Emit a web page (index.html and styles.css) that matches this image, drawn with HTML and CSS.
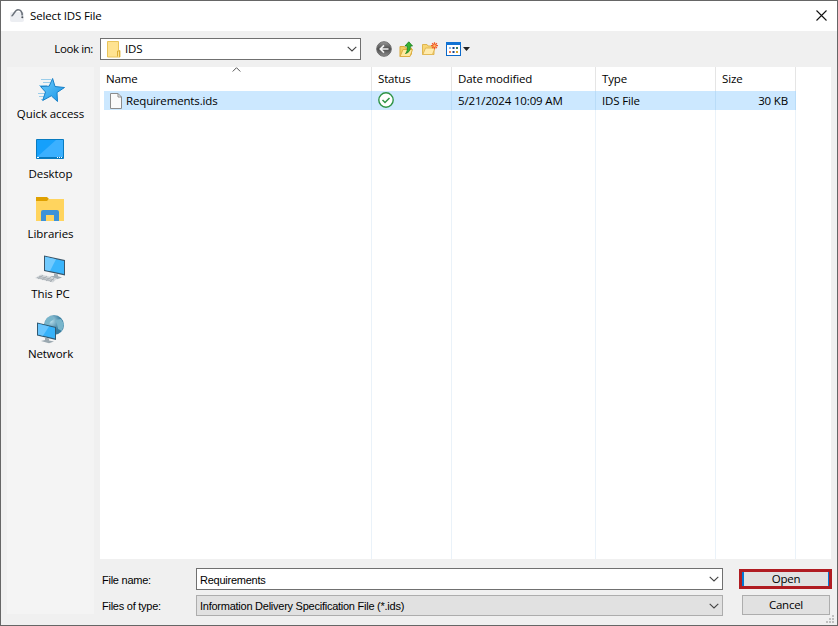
FILE: index.html
```html
<!DOCTYPE html>
<html lang="en">
<head>
    <meta charset="UTF-8">
    <meta name="viewport" content="width=device-width, initial-scale=1.0">
    <title>Select IDS File</title>
    <link rel="stylesheet" href="styles.css">
</head>
<body>
    <div class="dialog">
        <!-- Title bar -->
        <header class="titlebar">
            <svg class="app-icon" width="14" height="14" viewBox="0 0 14 14">
                <rect x="0" y="4" width="14" height="10" rx="2" fill="#eceef2"/>
                <path d="M1.500 8C4 7.500 4.500 1.800 8 1.800C11 1.800 12.200 4 12.200 7.500" fill="none" stroke="#6b727b" stroke-width="1.600"/>
                <circle cx="12.300" cy="9.200" r="1" fill="#4a5058"/>
            </svg>
            <h1>Select IDS File</h1>
            <svg class="close" width="11" height="11" viewBox="0 0 11 11"><path d="M.5.5l10 10M10.500.5l-10 10" stroke="#111" stroke-width="1.100"/></svg>
        </header>

        <!-- Folder selector and tools -->
        <div class="lookbar">
            <label class="look-label">Look in:</label>
            <div class="combo look-combo">
                <svg width="14" height="17" viewBox="0 0 14 17">
                    <path d="M.5.5h11v9h1.500v6.500H.5z" fill="#ffe391" stroke="#e9c45a"/>
                    <path d="M10.500 15.500v-5.500h2v6" fill="#ffe391" stroke="#dcae36"/>
                </svg>
                <span class="combo-text">IDS</span>
                <svg class="chevron" width="10" height="6" viewBox="0 0 10 6"><path d="M.7.8L5 5L9.300.8"/></svg>
            </div>
            <div class="tools">
                <svg width="16" height="16" viewBox="0 0 16 16">
                    <defs><linearGradient id="back" x2="0" y2="1"><stop stop-color="#9a9a9a"/><stop offset=".5" stop-color="#4c4c4c"/><stop offset="1" stop-color="#8f8f8f"/></linearGradient></defs>
                    <circle cx="8" cy="8" r="7.300" fill="url(#back)" stroke="#6d6d6d"/>
                    <path d="M12.500 8H4.500M8 4.300L4.300 8L8 11.700" fill="none" stroke="#f2f2f2" stroke-width="1.700"/>
                </svg>
                <svg width="15" height="17" viewBox="0 0 15 17">
                    <path d="M1 5.500h4.500l1 1.500h6V13L10 15.500H1z" fill="#f2cd62" stroke="#d9a93b"/>
                    <path d="M4 8.500h9.500L11 15.500H1z" fill="#ffe99f" stroke="#dcae43"/>
                    <path d="M6.500 12.500C8.500 11 8.500 8 8.200 5H6L9.800.8L13.500 5H11.300C11.500 8.500 10.500 11.500 6.500 12.500z" fill="#35b531" stroke="#187b20" stroke-width=".8"/>
                </svg>
                <svg width="16" height="14" viewBox="0 0 16 14">
                    <path d="M.5 2.500h4.500l1 1.500h6V12.500H.5z" fill="#f7d675" stroke="#dfb54f"/>
                    <path d="M3.500 6h9.500L10.500 12.500H.8z" fill="#ffebad" stroke="#e2b957"/>
                    <path d="M12.500 .2v7M9 3.700h7M10.100 1.300l4.800 4.800M14.900 1.300L10.100 6.100" stroke="#f05a28" stroke-width="1.300"/>
                    <circle cx="12.500" cy="3.700" r="1.200" fill="#ffc06b"/>
                </svg>
                <svg width="24" height="14" viewBox="0 0 24 14">
                    <rect x=".5" y=".5" width="14" height="13" fill="#fff" stroke="#0a68c9"/>
                    <path d="M0 0h15v3H0z" fill="#1173d4"/>
                    <path d="M3 5h2v2H3z" fill="#8dbbe8"/>
                    <path d="M6.500 5h2v2h-2zM6.500 9h2v2h-2z" fill="#17478f"/>
                    <path d="M10 5h2v2h-2z" fill="#3b7c5b"/>
                    <path d="M3 9h2v2H3z" fill="#ef7d53"/>
                    <path d="M10 9h2v2h-2z" fill="#d6a72d"/>
                    <path d="M17 5h7l-3.500 4z" fill="#222"/>
                </svg>
            </div>
        </div>

        <div class="content">
            <!-- Places -->
            <nav class="places">
                <a class="place">
                    <svg width="32" height="32" viewBox="0 0 32 32">
                        <defs><linearGradient id="star" x2="1" y2="1"><stop stop-color="#70ccfa"/><stop offset="1" stop-color="#1594e8"/></linearGradient></defs>
                        <path d="M7 5.500h10M9 8.500h7M5 11.500h8M4 19.500h7M5 22.500h6M7 25.500h3" stroke="#9bcdea"/>
                        <path d="M18.600 4.500L21 12.500L30.500 13.500L23 18.500L23.500 27.500L17.300 21.800L8.700 26.500L11.500 18L6.500 12.500L15.200 12.200z" fill="url(#star)" stroke="#1680c8"/>
                    </svg>
                    <span>Quick access</span>
                </a>
                <a class="place">
                    <svg width="32" height="32" viewBox="0 0 32 32">
                        <path d="M2.500 5.500h27v19h-27z" fill="#15a0fb" stroke="#087bc0"/>
                        <path d="M3 23L22 6h7v17z" fill="#3bb0ff"/>
                        <path d="M3 23.500h26" stroke="#0877bc"/>
                        <path d="M3 23.500h2M23 23.500h1M25 23.500h1M27 23.500h1" stroke="#fff"/>
                    </svg>
                    <span>Desktop</span>
                </a>
                <a class="place">
                    <svg width="32" height="32" viewBox="0 0 32 32">
                        <path d="M2 3h11l2 2-2 3H2z" fill="#dfa000"/>
                        <path d="M2 7h11l2-2h15v22H2z" fill="#ffd45e"/>
                        <path d="M7 27V18q0-2 2-2h14q2 0 2 2v9h-5v-6h-8v6z" fill="#3c92d7"/>
                    </svg>
                    <span>Libraries</span>
                </a>
                <a class="place">
                    <svg width="32" height="32" viewBox="0 0 32 32">
                        <path d="M10 1.500L31 6V21.500L10 17z" fill="#3a566a"/>
                        <path d="M11 2.800L30 7V20L11 16z" fill="#3ab5fc"/>
                        <path d="M11 2.800L22 5.200L16 17L11 16z" fill="#71cafe"/>
                        <path d="M20 19.500l4 1v3l-4-1zM16 22.500l6-1 6 2-5 1.800z" fill="#a1adb5"/>
                        <path d="M7 20.500l16 4-4 4L1 24z" fill="#d3d7da"/>
                        <path d="M5 22.300l15 3.700M3 23.500l15 3.700M9 21l-5 4M13 22l-5 4M17 23l-5 4M20 24l-4 4" stroke="#969ea5" stroke-width=".6"/>
                    </svg>
                    <span>This PC</span>
                </a>
                <a class="place">
                    <svg width="32" height="32" viewBox="0 0 32 32">
                        <defs><radialGradient id="globe" cx=".35" cy=".3"><stop stop-color="#b8dfec"/><stop offset="1" stop-color="#377c9f"/></radialGradient></defs>
                        <circle cx="20" cy="11" r="10" fill="url(#globe)"/>
                        <path d="M13 4l5-2 2 3-4 3-2 5-4-2zM21 6l6-1 3 5-2 7-4-2-1-5z" fill="#78b5cb"/>
                        <path d="M3 8.500L22 13V26L3 21.500z" fill="#315971"/>
                        <path d="M4 9.800L21 13.800V24.500L4 20.500z" fill="#36b2fa"/>
                        <path d="M4 9.800L15 12.400L9 21.700L4 20.500z" fill="#69c5fd"/>
                        <path d="M11 23.500l4 1v2l5 1-5 1.800-8-2.300 4-1z" fill="#9ba8b0"/>
                    </svg>
                    <span>Network</span>
                </a>
            </nav>

            <!-- File list -->
            <main class="files">
                <div class="file-row file-head">
                    <span>Name</span>
                    <span>Status</span>
                    <span>Date modified</span>
                    <span>Type</span>
                    <span>Size</span>
                    <svg class="sort" width="9" height="5" viewBox="0 0 9 5"><path d="M.7 4.500L4.500.7L8.300 4.500" fill="none" stroke="#555"/></svg>
                </div>
                <div class="file-row selected">
                    <span class="file-name">
                        <svg width="12" height="16" viewBox="0 0 12 16"><path d="M.5.5h7.500l3.500 3.500v11.500H.5z" fill="#fafafa" stroke="#8c8c8c"/><path d="M8 .5V4h3.500" fill="none" stroke="#8c8c8c"/></svg>
                        <b>Requirements.ids</b>
                    </span>
                    <span class="file-status">
                        <svg width="16" height="16" viewBox="0 0 16 16"><circle cx="8" cy="8" r="7.200" fill="#fff" stroke="#2f9446" stroke-width="1.400"/><path d="M4.500 8l2.500 2.500L11.500 6" fill="none" stroke="#2f9446" stroke-width="1.500"/></svg>
                    </span>
                    <span class="file-date">5/21/2024 10:09 AM</span>
                    <span class="file-type">IDS File</span>
                    <span class="file-size">30 KB</span>
                </div>
                <div class="file-row file-empty">
                    <span></span><span></span><span></span><span></span><span></span>
                </div>
            </main>
        </div>

        <!-- File name, type and buttons -->
        <footer class="bottom">
            <label>File name:</label>
            <div class="combo">
                <span class="combo-text">Requirements</span>
                <svg class="chevron" width="10" height="6" viewBox="0 0 10 6"><path d="M.7.8L5 5L9.300.8"/></svg>
            </div>
            <button class="open"><span>Open</span></button>
            <label>Files of type:</label>
            <div class="combo disabled">
                <span class="combo-text">Information Delivery Specification File (*.ids)</span>
                <svg class="chevron" width="10" height="6" viewBox="0 0 10 6"><path d="M.7.8L5 5L9.300.8"/></svg>
            </div>
            <button class="cancel">Cancel</button>
        </footer>
        <svg class="grip" width="8" height="8" viewBox="0 0 8 8"><path d="M6 0h2v2H6zM3 3h2v2H3zM6 3h2v2H6zM0 6h2v2H0zM3 6h2v2H3zM6 6h2v2H6z" fill="#bfbfbf"/></svg>
    </div>
</body>
</html>
```
FILE: styles.css
```css
* {
    box-sizing: border-box;
}

body {
    margin: 0;
    font-family: "Open Sans", "Noto Sans", sans-serif;
    font-size: 11.5px;
    letter-spacing: -0.15px;
    color: #000;
}

svg {
    display: block;
    flex: none;
}

.dialog {
    position: relative;
    display: flex;
    flex-direction: column;
    width: 838px;
    height: 626px;
    border: 1px solid #666;
    background: #f0f0f0;
    overflow: hidden;
}

/* Title bar */
.titlebar {
    display: flex;
    align-items: center;
    height: 30px;
    padding: 0 10px 2px 9px;
    background: #fff;
}

.titlebar h1 {
    flex: 1;
    margin: 0 0 0 6px;
    font-size: 11.5px;
    font-weight: normal;
}

/* Look in */
.lookbar {
    display: flex;
    align-items: center;
    height: 36px;
}

.look-label {
    width: 92px;
    padding-bottom: 2px;
    text-align: right;
    letter-spacing: -0.4px;
}

.combo {
    display: flex;
    align-items: center;
    height: 22px;
    padding: 0 3px;
    border: 1px solid #707070;
    background: #fff;
}

.look-combo {
    width: 261px;
    margin-left: 7px;
    padding-left: 6px;
}

.combo-text {
    flex: 1;
}

.look-combo .combo-text {
    margin: 0 0 2px 4px;
}

.chevron path {
    fill: none;
    stroke: #444;
    stroke-width: 1.1;
}

.tools {
    display: flex;
    align-items: center;
    gap: 8px;
    margin-left: 15px;
}

.tools svg + svg {
    position: relative;
    left: -1px;
}

/* Main area */
.content {
    display: flex;
    height: 547px;
}

.places {
    width: 87px;
    height: 547px;
    margin: 0 6px;
    padding-top: 7px;
    background: #f4f4f4;
}

.place {
    display: flex;
    flex-direction: column;
    align-items: center;
    height: 60px;
}

.place svg {
    margin-right: 2px;
}

.place span {
    line-height: 16px;
    letter-spacing: -0.08px;
}

.files {
    display: flex;
    flex-direction: column;
    width: 731px;
    height: 492px;
    padding-left: 4px;
    background: #fff;
}

.file-row {
    display: grid;
    grid-template-columns: 268px 80px 144px 120px 80px;
    height: 19px;
    line-height: 19px;
}

.file-row > span {
    padding-left: 6px;
    border-right: 1px solid #eaf2f9;
}

.file-head {
    position: relative;
    height: 24px;
    line-height: 24px;
}

.file-head > span {
    border-right-color: #e5e5e5;
}

.file-head > span:first-child {
    padding-left: 2px;
}

.sort {
    position: absolute;
    top: 0;
    left: 128px;
}

.selected {
    width: 692px;
    background: #cce8ff;
}

.selected > span {
    border-right-color: #b9dcf8;
}

.selected > .file-name {
    display: flex;
    align-items: center;
}

.file-name b {
    margin-left: 4px;
    font-weight: normal;
}

.file-status {
    padding-top: 1px;
}

.selected > .file-size {
    padding-right: 7px;
    text-align: right;
}

.file-empty {
    flex: 1;
}

/* Bottom controls, in the free strip beside the places */
.bottom {
    display: grid;
    grid-template-columns: 94px 527px 93px;
    grid-template-rows: 22px 21px;
    row-gap: 5px;
    align-items: center;
    margin: -46px 0 0 101px;
    font-family: "Liberation Sans", Arial, sans-serif;
    font-size: 11px;
    letter-spacing: -0.25px;
}

.bottom label,
.bottom .combo-text {
    padding-top: 1px;
}

.bottom .combo {
    height: 100%;
}

.bottom .disabled {
    border-color: #adadad;
    background: #e1e1e1;
}

button {
    padding: 0;
    border: 1px solid #adadad;
    background: #e1e1e1;
    color: #000;
    font-family: "Open Sans", "Noto Sans", sans-serif;
    font-size: 11.5px;
    letter-spacing: -0.25px;
}

.open {
    width: 93px;
    height: 20px;
    margin-left: 16px;
    border: 3px solid #b01c22;
}

.open span {
    display: block;
    height: 14px;
    line-height: 13px;
    border: solid #0078d7;
    border-width: 0 1px 0 2px;
}

.cancel {
    width: 88px;
    height: 20px;
    margin: -1px 0 0 19px;
    line-height: 16px;
}

.grip {
    position: absolute;
    right: 3px;
    bottom: 2px;
}
```
